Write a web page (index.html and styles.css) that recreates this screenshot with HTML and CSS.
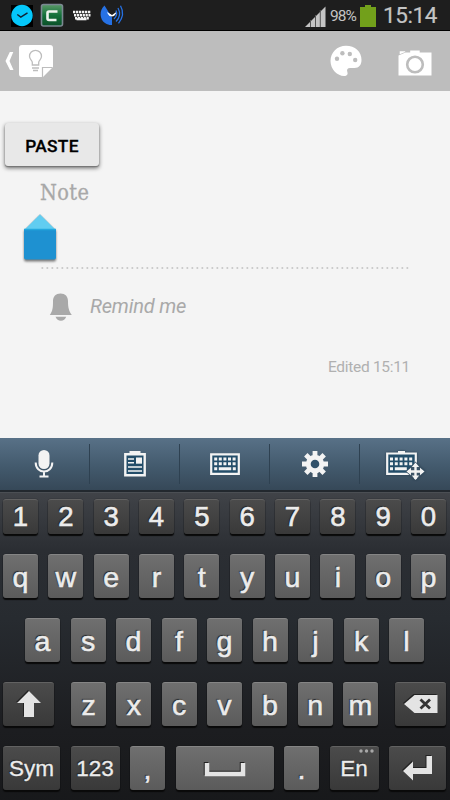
FILE: index.html
```html
<!DOCTYPE html>
<html lang="en">
<head>
<meta charset="utf-8">
<title>Note</title>
<link rel="stylesheet" href="styles.css">
</head>
<body>
<div class="screen">
  <header class="status">
    <svg class="status-icons" width="130" height="30" viewBox="0 0 130 30">
      <path fill="#000" d="M11 5h22v22H11z"/>
      <circle cx="22" cy="15.5" r="10.7" fill="#05c8fb"/>
      <path d="M17.3 14.5l3.5 2.6 6.7-4.3" fill="none" stroke="#123" stroke-width="1.4"/>
      <defs><linearGradient id="green" x2="0" y2="1"><stop stop-color="#5a9a68"/><stop offset=".5" stop-color="#14713a"/><stop offset="1" stop-color="#0b4f28"/></linearGradient></defs>
      <rect x="41.500" y="4.500" width="21" height="21.500" rx="2" fill="url(#green)" stroke="#7b8892" stroke-width="1.600"/>
      <path d="M57.500 11.500H49q-1.500 0-1.500 1.500v5.500q0 1.500 1.500 1.500h7.500" fill="none" stroke="#eef3ee" stroke-width="2.600"/>
      <g fill="none" stroke="#f4f4f4" stroke-width="2.400">
        <path d="M73 12h18" stroke-dasharray="2.300 .7"/>
        <path d="M74 15.200h16.500" stroke-dasharray="2.200 .7"/>
        <path d="M75 18.200h14" stroke-dasharray="2.200 .7"/>
      </g>
      <path d="M76.500 19.200h10" stroke="#f4f4f4" stroke-width="2.200"/>
      <path d="M104.500 5.500C99 10 99.500 19.500 105 23c2.500 1.800 4.800 2.200 7 2v-7.500z" fill="#2671e4"/>
      <path d="M108.300 13.500a3.800 3.800 0 0 0 7 0l-3.200 2.300z" fill="#fff" stroke="#fff" stroke-width="1.200"/>
      <g fill="none" stroke="#2671e4" stroke-width="1.300"><path d="M116 10.500q2 4.500-2 8.500"/><path d="M118 8q4 7.500-2 13.500"/><path d="M120.500 5.800q5 9-2 17.500"/></g>
    </svg>
    <div class="status-right">
      <svg class="signal" width="21" height="21" viewBox="0 0 21 21"><path d="M0 21L20.500.5V21z" fill="#c4c4c4"/><path d="M5.500 14v7M10.500 9v12M15.300 4v17" stroke="#555" stroke-width="1"/></svg>
      <span class="percent">98%</span>
      <svg class="battery" width="16" height="22" viewBox="0 0 16 22"><path d="M0 2h5V0h6v2h5v20H0z" fill="#72a01b"/></svg>
      <span class="clock">15:14</span>
    </div>
  </header>

  <nav class="appbar">
    <svg width="56" height="60" viewBox="0 0 56 60">
      <path d="M9.800 21h3.500L9.500 30l4 9H10l-4.500-9z" fill="#fff"/>
      <path d="M22 14h28a3 3 0 0 1 3 3v19L43 46H22a3 3 0 0 1-3-3V17a3 3 0 0 1 3-3z" fill="#fff"/>
      <path d="M42.500 46V36.500h10" fill="none" stroke="#bdbdbd" stroke-width="1.200"/>
      <path d="M32.300 34v-2.500c0-2-2.800-3-2.800-6.200a6 6 0 0 1 12 0c0 3.200-2.800 4.200-2.800 6.200V34zM32 37h7M33 39.500h5" fill="none" stroke="#bdbdbd" stroke-width="1.300"/>
    </svg>
    <div class="actions">
      <svg width="32" height="32" viewBox="0 0 32 32"><path d="M16 .8C7 .8.500 7.500.500 16S7.500 31 14 31c3.200 0 4.200-1.500 3.300-4.200-.8-2.400.4-3.800 2.700-3.800h4.500c4.500 0 7-3.200 7-8C31.500 6.500 25 .8 16 .8z" fill="#fff"/><g fill="#bdbdbd"><circle cx="7" cy="13.700" r="2.200"/><circle cx="12.400" cy="8.300" r="2.200"/><circle cx="19.800" cy="9" r="2.200"/><circle cx="25.200" cy="15" r="2.200"/></g></svg>
      <svg class="camera" width="34" height="26" viewBox="0 0 34 26"><path d="M.5 5.500L7.500 2.500h4.700V.500h9.500v2h11.800v23H.5zM1.700 1.300h5.500v.7L1.700 4.300z" fill="#fff"/><circle cx="17" cy="14.500" r="7.800" fill="none" stroke="#bdbdbd" stroke-width="2.600"/></svg>
    </div>
  </nav>

  <main class="note">
    <button class="paste">PASTE</button>
    <div class="note-text">Note</div>
    <svg class="handle" width="36" height="50" viewBox="0 0 36 50">
      <path d="M2 17L18 1.200 34 17z" fill="#61cdf1" stroke="#b9cdd3" stroke-width=".6"/>
      <path d="M2 16h32v28.500a2 2 0 0 1-2 2H4a2 2 0 0 1-2-2z" fill="#1e91d1"/><path d="M2 16.500h32" stroke="#23a8df" stroke-width="1.500"/>
    </svg>
    <svg class="dots" width="370" height="2" viewBox="0 0 370 2"><path d="M1.500 1H370" stroke="#cbcbcb" stroke-width="2" stroke-dasharray="1.700 3.300"/></svg>
    <div class="remind">
      <svg width="24" height="28" viewBox="0 0 24 28"><path d="M11.500.6c4.800 0 7.500 3 7.500 7.500 0 6.500.8 9.800 3.800 13.900H.8C3.800 17.900 4 14.600 4 8.100 4 3.600 6.700.6 11.500.6zM6.500 23.800h10.700q-1.500 4-5.300 4t-5.400-4z" fill="#a9a9a9"/></svg>
      <span>Remind me</span>
    </div>
    <div class="edited">Edited 15:11</div>
  </main>

  <div class="tools">
    <div class="tool"><svg width="24" height="32" viewBox="0 0 24 32"><rect x="6.500" y="2" width="11" height="19" rx="5.500" fill="#f3f3f3"/><path d="M3.700 14.500c0 12 16.600 12 16.600 0M12 23v5M7.500 28.500h9" fill="none" stroke="#f3f3f3" stroke-width="2"/></svg></div>
    <div class="tool"><svg width="24" height="32" viewBox="0 0 24 32"><path d="M2.300 6.300h19.400v21H2.300z" fill="#234d69" stroke="#f3f3f3" stroke-width="2.400"/><path d="M6.500 3h11v4h-11z" fill="#f3f3f3"/><path d="M5 11h6M5 14.800h6M5 19h14M5 23h14" stroke="#f3f3f3" stroke-width="1.600"/><path d="M13 9.500h6v6.200h-6z" fill="#f3f3f3"/></svg></div>
    <div class="tool"><svg width="32" height="32" viewBox="0 0 32 32"><path d="M2.200 6.300h27.600v19.500H2.200z" fill="#234d69" stroke="#f3f3f3" stroke-width="2.200"/><path d="M5.200 11H28M5.200 15.700H28" stroke="#f3f3f3" stroke-width="3" stroke-dasharray="3 1.600"/><path d="M5.200 20.800h3m1.600 0h12.400m1.600 0h3" stroke="#f3f3f3" stroke-width="3"/></svg></div>
    <div class="tool"><svg width="28" height="32" viewBox="-14 -16 28 32"><g stroke="#f3f3f3" stroke-width="4.800"><path d="M0-13V13M-13 0H13M-9.200-9.200L9.200 9.200M9.200-9.200L-9.200 9.200"/></g><circle r="9.200" fill="#f3f3f3"/><circle r="4.300" fill="#31516a"/></svg></div>
    <div class="tool"><svg class="move" width="40" height="32" viewBox="0 0 40 32"><path d="M2.200 5.500h28.600v20.300H2.200z" fill="#234d69" stroke="#f3f3f3" stroke-width="2.200"/><path d="M13 3h7v3h-7z" fill="#f3f3f3"/><path d="M5 11H29M5 15.700H29" stroke="#f3f3f3" stroke-width="3" stroke-dasharray="3 1.800"/><path d="M5 20.800h3m1.800 0h12" stroke="#f3f3f3" stroke-width="3"/><path d="M30.500 13.500l5 5.500 5 4.500-5 4.500-5 5-5-5-5-4.500 5-4.500z" fill="#3d5467"/><path d="M30.500 16v15M23 23.500h15" stroke="#f3f3f3" stroke-width="2.400"/><path d="M30.500 14.500l3.700 4.500h-7.400zM30.500 32l3.700-4.500h-7.400zM21.500 23.500l4.500-3.700v7.400zM39.500 23.500L35 19.800v7.400z" fill="#f3f3f3"/></svg></div>
  </div>

  <section class="keyboard">
    <div class="row digits"><b>1</b><b>2</b><b>3</b><b>4</b><b>5</b><b>6</b><b>7</b><b>8</b><b>9</b><b>0</b></div>
    <div class="row"><b>q</b><b>w</b><b>e</b><b>r</b><b>t</b><b>y</b><b>u</b><b>i</b><b>o</b><b>p</b></div>
    <div class="row home"><b>a</b><b>s</b><b>d</b><b>f</b><b>g</b><b>h</b><b>j</b><b>k</b><b>l</b></div>
    <div class="row third">
      <b class="dark wide"><svg width="26" height="28" viewBox="0 0 26 28"><path d="M13 1l12 12h-7v14H8V13H1z" fill="#e4e4e4"/></svg></b>
      <div class="letters"><b>z</b><b>x</b><b>c</b><b>v</b><b>b</b><b>n</b><b>m</b></div>
      <b class="dark wide"><svg width="36" height="20" viewBox="0 0 36 20"><path d="M1 10L11.500 1H34.500v18h-23z" fill="#e4e4e4"/><path d="M17.500 5.500l9.500 9m0-9l-9.500 9" stroke="#333" stroke-width="2.800"/></svg></b>
    </div>
    <div class="row bottom">
      <b class="dark small sym">Sym</b><b class="dark small num">123</b><b>,</b>
      <b class="space"><svg width="42" height="16" viewBox="0 0 42 16"><path d="M3 1v11h36V1" fill="none" stroke="#e4e4e4" stroke-width="4.500"/></svg></b>
      <b>.</b><b class="dark small num lang">En<svg class="more" width="15" height="4" viewBox="0 0 15 4"><g fill="#a8a8a8"><circle cx="2" cy="2" r="1.700"/><circle cx="7.500" cy="2" r="1.700"/><circle cx="13" cy="2" r="1.700"/></g></svg></b>
      <b class="dark sym"><svg width="32" height="28" viewBox="0 0 32 28"><path d="M24.500 2H30v18H11v6.500L1 17l10-9.500V14h13.500z" fill="#e4e4e4"/></svg></b>
    </div>
  </section>
</div>
</body>
</html>
```

FILE: styles.css
```css
* { box-sizing: border-box; }
body { margin: 0; }
svg { display: block; flex: none; }
.screen { width: 450px; height: 800px; overflow: hidden; display: flex; flex-direction: column; background: #f4f4f4; font-family: Roboto, sans-serif; }

.status { height: 31px; flex: none; display: flex; justify-content: space-between; background: #1e1e1e; border-bottom: 1px solid #000; color: #c4c4c4; }
.status-right { display: flex; align-items: flex-start; padding: 5px 12px 0 0; }
.signal { margin: 1px -1px 0 0; }
.percent { width: 27px; margin: 3px 3px 0 5px; font-size: 15.5px; line-height: 16px; letter-spacing: -.9px; white-space: nowrap; }
.clock { width: 55px; margin-left: 7px; font-size: 22.5px; line-height: 22px; letter-spacing: -.4px; white-space: nowrap; -webkit-text-stroke: .2px #c4c4c4; }
.status-right .clock { margin-top: -1px; }

.appbar { height: 60px; flex: none; display: flex; justify-content: space-between; background: #bdbdbd; }
.actions { display: flex; align-items: center; gap: 36px; padding-right: 18px; }
.camera { margin-top: 3px; }

.note { height: 347px; flex: none; padding: 32px 40px 0; display: flex; flex-direction: column; }
.paste { width: 94px; height: 43px; margin-left: -35px; padding: 2px 0 0; border: 0; border-radius: 3px; background: #e8e8e8; box-shadow: 0 1px 1px #777, 0 2px 4px #666; color: #000; font: 500 17.3px Roboto, sans-serif; letter-spacing: .3px; -webkit-text-stroke: .3px #000; }
.note-text { margin-top: 13px; height: 28px; color: #a8a8a8; font-family: "DejaVu Serif Condensed", "DejaVu Serif", serif; font-stretch: condensed; font-size: 21.5px; line-height: 28px; letter-spacing: .4px; -webkit-text-stroke: .3px #a8a8a8; }
.handle { margin: 6px 0 0 -18px; filter: drop-shadow(0 2px 1px #777); }
.dots { margin-top: 4px; }
.remind { display: flex; align-items: center; gap: 17px; margin: 24px 0 0 9px; color: #a9a9a9; font-size: 20px; font-style: italic; line-height: 26px; letter-spacing: -.2px; }
.remind span { margin-top: -2px; }
.edited { margin-top: 36px; color: #b0b0b0; font-size: 15.5px; line-height: 20px; letter-spacing: -.3px; text-align: right; }

.tools { height: 54px; flex: none; display: grid; grid-template-columns: repeat(5, 90px); background: linear-gradient(#587187, #435a6d 55%, #364858); border-bottom: 2px solid #22282e; padding: 6px 0; }
.tool { display: flex; align-items: center; justify-content: center; border-right: 1px solid #2e4151; }
.tool:first-child { padding-right: 2px; }
.tool:last-child { border: 0; }
.move { filter: drop-shadow(0 0 1px #263c4d); }

.keyboard { flex: 1; padding: 6px 4px 0 3px; border-top: 1px solid #4b4f54; background: linear-gradient(#404348, #2b2e33 18%, #272b30 40%, #1c1d20 75%, #17181a); font-family: "Liberation Sans", Arial, sans-serif; }
.row { display: flex; justify-content: space-between; height: 44px; margin-bottom: 20px; }
.digits { height: 35px; }
.home { padding: 0 22px; }
.letters { width: 307px; display: flex; justify-content: space-between; }
b { width: 35px; height: 100%; flex: none; display: flex; align-items: center; justify-content: center; padding-top: 1px; border-radius: 3px; border-top: 1px solid #858585; background: linear-gradient(#6f6f6f, #5b5b5b); box-shadow: 0 2px 1px #090909, 0 0 1px #111; color: #ececec; font-size: 28.5px; line-height: 34px; font-weight: 400; -webkit-text-stroke: .6px #ececec; text-shadow: -1px -1px 1px #222; }
.digits b, .dark { background: linear-gradient(#4b4b4b, #393939); border-top-color: #626262; }
.digits b { font-size: 27.5px; padding-top: 0; }
b svg { filter: drop-shadow(-1px -1px 0 #222); margin-top: -2px; }
.wide { width: 51px; }
.sym { width: 57px; }
.num { width: 49px; }
.small { font-size: 22.5px; -webkit-text-stroke-width: .3px; }
.space { width: 98px; }
.space svg { margin-top: 2px; }
.lang { position: relative; }
b .more { position: absolute; right: 5px; top: 2px; margin: 0; filter: none; }
```
